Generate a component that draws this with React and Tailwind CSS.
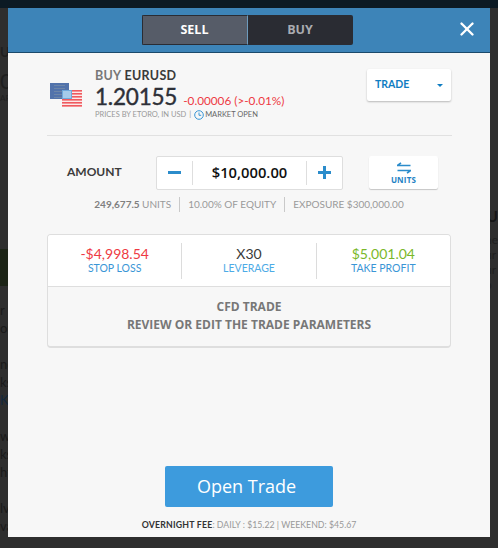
import React from 'react';
import { X } from 'lucide-react';

const Flags = () => (
  <svg width="32" height="24" viewBox="0 0 32 24" className="shrink-0">
    <rect x="0" y="0" width="19" height="16" fill="#5273ab" />
    {[2, 5, 8, 11, 14].map((y) => (
      <rect key={y} x="4" y={y} width="11" height="1" fill="#6d86a8" />
    ))}
    <rect x="12" y="7" width="20" height="17" fill="#fbe9e9" />
    {[7, 10, 13, 16, 19, 22].map((y) => (
      <rect key={y} x="12" y={y} width="20" height="1.6" fill="#ef5a5f" />
    ))}
    <rect x="12" y="7" width="10" height="9" fill="#6fa9dc" />
    <rect x="13" y="8" width="8" height="7" fill="#a5cbea" />
  </svg>
);

const Stat = ({ value, label, valueClass, labelClass, border }) => (
  <div className={`flex-1 flex flex-col items-center justify-center h-[36px] ${border ? 'border-r border-[#dcdcdc]' : ''}`}>
    <div className={`text-[14px] leading-[16px] ${valueClass}`}>{value}</div>
    <div className={`text-[10.5px] leading-[13px] ${labelClass}`}>{label}</div>
  </div>
);

export default function App() {
  return (
    <div className="relative w-[498px] h-[548px] overflow-hidden bg-[#2e2e2e] font-['Lato',sans-serif]">
      {/* top nav behind the overlay */}
      <div className="h-[8px] bg-[#0c1a24]" />

      {/* page text behind the overlay */}
      <div className="absolute left-0 top-[44px] text-[13px] leading-[16px] font-bold text-[#1f1f1f]">US</div>
      <div className="absolute left-0 top-[70px] text-[22px] leading-[22px] text-[#1f1f1f]">0</div>
      <div className="absolute left-0 top-[93px] text-[8px] leading-[10px] text-[#1f1f1f]">AR</div>
      <div className="absolute left-0 top-[249px] w-[8px] h-[37px] bg-[#1c2416]" />
      <div className="absolute left-0 top-[301px] text-[13px] leading-[18px] text-[#1a1a1a]">
        r<br />ou<br /><br />ne<br />ks<br /><span className="text-[#13283d]">K</span><br /><br />w<br />ks<br />ht<br /><br />lv<br />va
      </div>
      <div className="absolute right-0 top-[207px] text-[15px] leading-[18px] font-bold text-[#161616]">EU</div>
      <div className="absolute right-0 top-[232px] text-[12px] leading-[15px] text-[#1f1f1f]">ne<br />ur<br />ur<br />b</div>

      {/* trade modal */}
      <div className="absolute left-[8px] top-[8px] w-[482px] h-[529px] bg-[#f7f7f7] flex flex-col">
        <div className="relative h-[45px] shrink-0 bg-[#3d84b8] border-b border-[#1b4a6b] flex items-center justify-center">
          <div className="flex w-[211px] h-[30px] mr-[4px] rounded-[2px] overflow-hidden bg-[#2a2c33] text-[12.5px] font-bold font-['Open_Sans',sans-serif]">
            <div className="w-[106px] flex items-center justify-center bg-[#565c68] text-white border border-[#2a2c33] border-r-[#6d9bbd]">SELL</div>
            <div className="flex-1 flex items-center justify-center text-[#a9abb0]">BUY</div>
          </div>
          <X className="absolute right-[12px] top-[10px] text-white" size={22} strokeWidth={2.6} />
        </div>

        {/* instrument header */}
        <div className="ml-[39px] mr-[38px] h-[83px] shrink-0 border-b border-[#e1e1e1] flex items-start">
          <div className="mt-[30px] ml-[3px] mr-[13px]">
            <Flags />
          </div>
          <div className="mt-[16px]">
            <div className="flex gap-[3px] h-[14px] text-[12.5px] leading-[14px] font-bold tracking-[0.3px] text-[#777]">
              <span className="inline-block">BUY</span>
              <span className="inline-block text-[#3a3a3a]">EURUSD</span>
            </div>
            <div className="flex items-baseline h-[23px] mt-[2px]">
              <span className="inline-block text-[22.5px] leading-[23px] text-[#2d3038] tracking-[-0.2px] [-webkit-text-stroke:0.4px_#2d3038]">1.20155</span>
              <span className="inline-block ml-[6px] text-[11.75px] leading-[14px] text-[#ee3a43]">-0.00006 (&gt;-0.01%)</span>
            </div>
            <div className="flex items-center mt-[2px] text-[7.5px] leading-[10px] text-[#999]">
              PRICES BY ETORO, IN USD <span className="mx-[3px]">|</span>
              <svg width="10" height="10" viewBox="0 0 10 10" className="mr-[1px]" fill="none" stroke="#3a96d6" strokeWidth="1">
                <circle cx="5" cy="5" r="4.3" />
                <path d="M5 2.5V5.3H7.2" />
              </svg>
              <span className="text-[#666]">MARKET OPEN</span>
            </div>
          </div>
          <div className="ml-auto mr-[1px] mt-[16px] w-[84px] h-[32px] bg-white rounded-[2px] shadow-[0_1px_2px_rgba(0,0,0,0.25)] flex items-center justify-between pl-[8px] pr-[8px]">
            <span className="text-[10.5px] font-bold text-[#0f7dc2]">TRADE</span>
            <span className="w-0 h-0 border-x-[3.5px] border-x-transparent border-t-[3.5px] border-t-[#0f7dc2]" />
          </div>
        </div>

        {/* amount */}
        <div className="mt-[19px] flex items-center ml-[59px] h-[35px] shrink-0">
          <span className="w-[89px] pb-[2px] text-[12px] font-bold text-[#3c3c3c]">AMOUNT</span>
          <div className="w-[187px] h-[34px] bg-white border border-[#dedede] rounded-[2px] flex items-center">
            <div className="w-[36px] h-[24px] border-r border-[#dedede] flex items-center justify-center">
              <span className="w-[13px] h-[3px] bg-[#2b8ccb]" />
            </div>
            <div className="flex-1 text-center text-[14.75px] font-semibold text-[#111] font-['Open_Sans',sans-serif]">$10,000.00</div>
            <div className="w-[36px] h-[24px] border-l border-[#dedede] flex items-center justify-center">
              <span className="relative w-[13px] h-[3px] bg-[#2b8ccb]">
                <span className="absolute left-[5px] top-[-5px] w-[3px] h-[13px] bg-[#2b8ccb]" />
              </span>
            </div>
          </div>
          <div className="ml-[26px] w-[69px] h-[33px] bg-white rounded-[2px] shadow-[0_1px_1px_rgba(0,0,0,0.2)] flex flex-col items-center justify-center pt-[2px]">
            <svg width="16" height="12" viewBox="0 0 16 12" fill="none" stroke="#2b8ccb" strokeWidth="1.6">
              <path d="M1 3.5H14.5M5 0.8L1.5 3.5" />
              <path d="M15 8.5H1.5M11 11.2L14.5 8.5" />
            </svg>
            <span className="text-[8px] leading-[12px] font-bold tracking-[0.2px] text-[#1f82c4] font-['Open_Sans',sans-serif]">UNITS</span>
          </div>
        </div>

        {/* exposure line */}
        <div className="mt-[7px] h-[15px] shrink-0 flex items-center justify-center text-[10px] text-[#9a9a9a]">
          <span className="font-bold text-[#808080]">249,677.5&nbsp;</span>UNITS
          <span className="mx-[8px] h-[15px] border-l border-[#c9c9c9]" />
          10.00% OF EQUITY
          <span className="mx-[8px] h-[15px] border-l border-[#c9c9c9]" />
          EXPOSURE $300,000.00
        </div>

        {/* trade parameters */}
        <div className="mt-[22px] mx-[39px] h-[114px] shrink-0 rounded-[4px] border border-[#dedede] border-b-2 bg-[#f7f7f7] overflow-hidden">
          <div className="h-[52px] bg-white border-b border-[#dedede] flex items-center">
            <Stat value="-$4,998.54" label="STOP LOSS" valueClass="text-[#ee3a43]" labelClass="text-[#3a96d6]" border />
            <Stat value="X30" label="LEVERAGE" valueClass="text-[#3a3a3a]" labelClass="text-[#4dabe6]" border />
            <Stat value="$5,001.04" label="TAKE PROFIT" valueClass="text-[#7ab82a]" labelClass="text-[#3a96d6]" />
          </div>
          <div className="text-center text-[12px] leading-[18px] font-bold text-[#777] pt-[11px] font-['Open_Sans',sans-serif]">
            <div>CFD TRADE</div>
            <div>REVIEW OR EDIT THE TRADE PARAMETERS</div>
          </div>
        </div>

        {/* footer */}
        <div className="mt-auto flex flex-col items-center pb-[6px]">
          <button className="w-[168px] h-[41px] pr-[5px] rounded-[2px] bg-[#3d9bdd] text-white text-[18px] font-['Open_Sans',sans-serif]">Open Trade</button>
          <div className="mt-[12px] text-[8.75px] leading-[12px] text-[#999]">
            <span className="font-bold text-[#333] tracking-[0.2px]">OVERNIGHT FEE</span>: DAILY : $15.22 | WEEKEND: $45.67
          </div>
        </div>
      </div>
    </div>
  );
}
